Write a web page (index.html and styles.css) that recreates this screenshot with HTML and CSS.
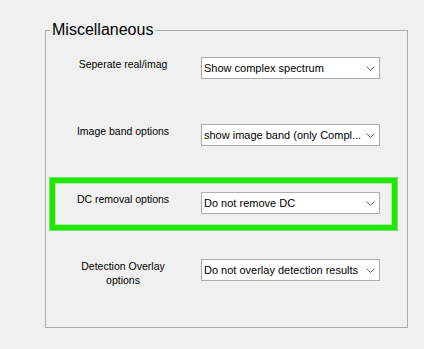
FILE: index.html
```html
<!DOCTYPE html>
<html lang="en">
<head>
    <meta charset="UTF-8">
    <title>Miscellaneous</title>
    <link rel="stylesheet" href="styles.css">
</head>
<body>
    <fieldset class="group">
        <legend>Miscellaneous</legend>
        <div class="rows">
            <div class="row">
                <label class="row-label">Seperate real/imag</label>
                <div class="combo">
                    <span class="combo-text">Show complex spectrum</span>
                    <svg class="combo-arrow" width="9" height="5" viewBox="0 0 9 5"><polyline points="0.5,0.5 4.5,4.5 8.5,0.5" fill="none" stroke="#666" stroke-width="1"/></svg>
                </div>
            </div>
            <div class="row">
                <label class="row-label">Image band options</label>
                <div class="combo">
                    <span class="combo-text">show image band (only Compl...</span>
                    <svg class="combo-arrow" width="9" height="5" viewBox="0 0 9 5"><polyline points="0.5,0.5 4.5,4.5 8.5,0.5" fill="none" stroke="#666" stroke-width="1"/></svg>
                </div>
            </div>
            <div class="row highlight">
                <label class="row-label">DC removal options</label>
                <div class="combo">
                    <span class="combo-text">Do not remove DC</span>
                    <svg class="combo-arrow" width="9" height="5" viewBox="0 0 9 5"><polyline points="0.5,0.5 4.5,4.5 8.5,0.5" fill="none" stroke="#666" stroke-width="1"/></svg>
                </div>
            </div>
            <div class="row">
                <label class="row-label">Detection Overlay options</label>
                <div class="combo">
                    <span class="combo-text">Do not overlay detection results</span>
                    <svg class="combo-arrow" width="9" height="5" viewBox="0 0 9 5"><polyline points="0.5,0.5 4.5,4.5 8.5,0.5" fill="none" stroke="#666" stroke-width="1"/></svg>
                </div>
            </div>
        </div>
    </fieldset>
</body>
</html>
```
FILE: styles.css
```css
html, body {
    margin: 0;
    padding: 0;
}
body {
    background-color: #f0f0f0;
    font-family: 'Liberation Sans', Arial, sans-serif;
    color: #000000;
    width: 424px;
    height: 349px;
    overflow: hidden;
}
.group {
    box-sizing: border-box;
    margin: 21px 0 0 45px;
    width: 363px;
    padding: 0;
    border: 1px solid #ababab;
}
.group legend {
    font-size: 16px;
    line-height: 18px;
    padding: 0 2px;
    margin-left: 4px;
}
.rows {
    display: grid;
    grid-template-rows: 67px 68px 67px 68px;
    padding-top: 18px;
}
.row {
    position: relative;
    display: flex;
    align-items: flex-start;
}
.row-label {
    box-sizing: border-box;
    width: 110px;
    margin-left: 22px;
    margin-right: 23px;
    font-size: 10.5px;
    line-height: 14px;
    text-align: center;
}
.combo {
    box-sizing: border-box;
    width: 179px;
    height: 22px;
    background-color: #ffffff;
    border: 1px solid #acacac;
    display: flex;
    align-items: center;
    justify-content: space-between;
    padding: 0 4px 0 2px;
    font-size: 11px;
}
.combo-text {
    white-space: nowrap;
    overflow: hidden;
}
.combo-arrow {
    flex-shrink: 0;
    margin-left: 4px;
}
.highlight::before {
    content: "";
    position: absolute;
    left: 4px;
    right: 10px;
    top: -14px;
    bottom: 29px;
    border: 5px solid #22e600;
    box-shadow: 0 0 0 1px #6fe86f, inset 0 0 0 1px #a8eea8;
    pointer-events: none;
}
```
